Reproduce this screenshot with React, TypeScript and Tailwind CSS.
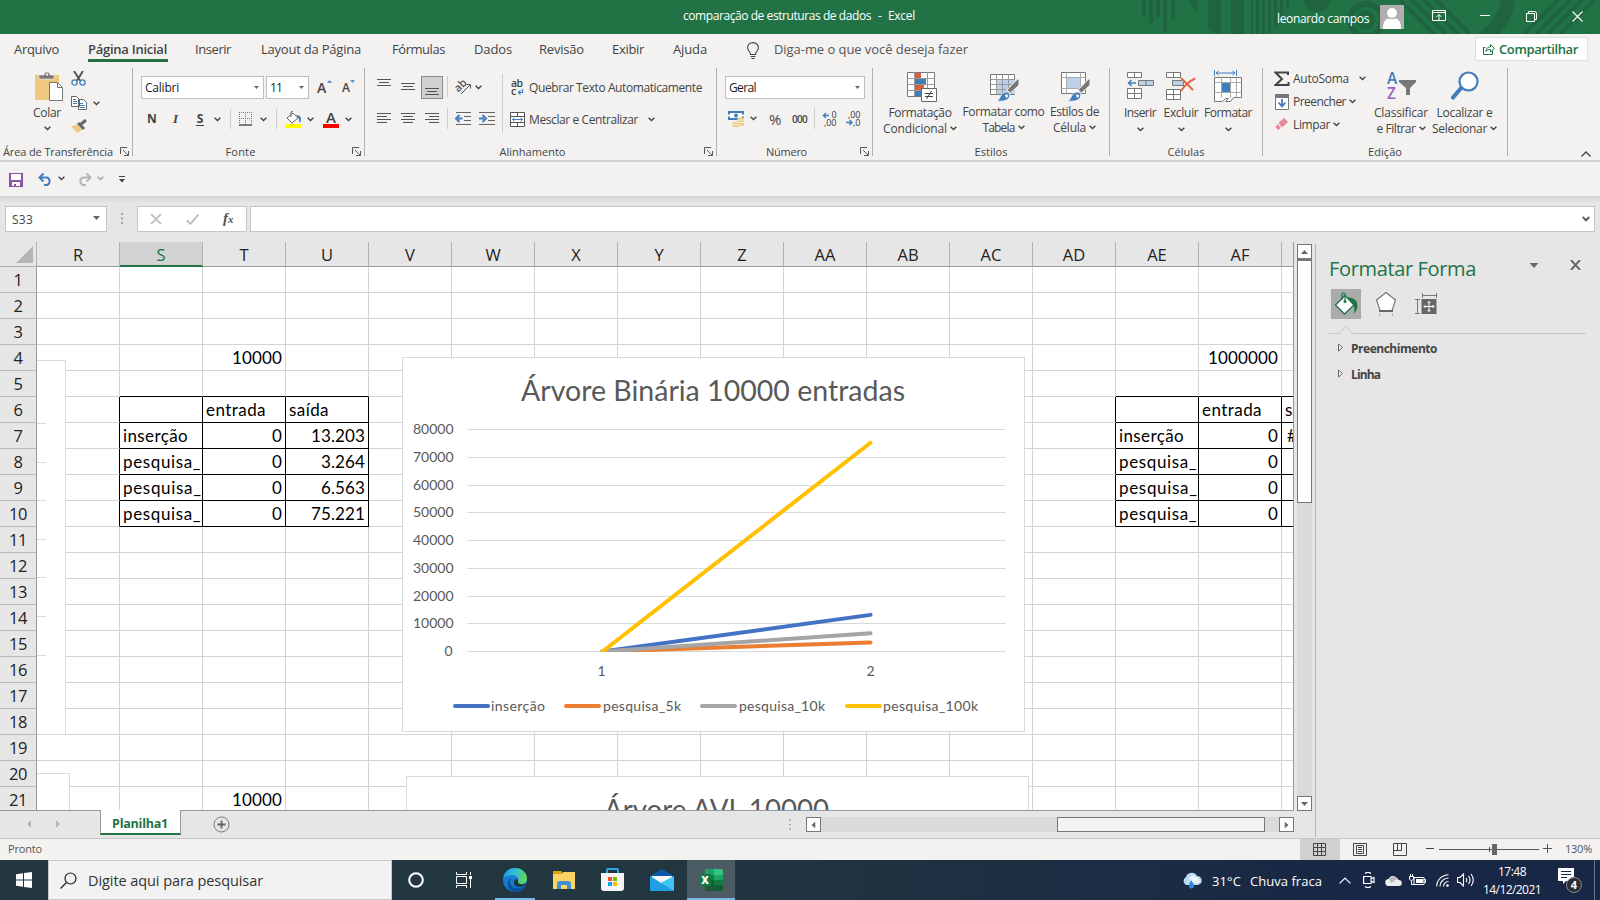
import { useLayoutEffect, useRef, useState } from "react";
import type { ReactNode } from "react";

const UI = "font-['Open_Sans','Noto_Sans',sans-serif]";
const BODY = "font-['Lato','Open_Sans',sans-serif]";

/** One line of text tracked so that it fills exactly `w` pixels. */
function Fit({ w, className = "", children }: { w: number; className?: string; children: string }) {
  const ref = useRef<HTMLSpanElement>(null);
  const [spacing, setSpacing] = useState(0);
  useLayoutEffect(() => {
    const el = ref.current;
    if (!el) return;
    const natural = el.getBoundingClientRect().width - spacing * children.length;
    setSpacing((w - natural) / children.length);
  }, [w, children]);
  return (
    <span className={`block shrink-0 whitespace-nowrap ${className}`} style={{ width: w }}>
      <span ref={ref} className="inline-block" style={{ letterSpacing: spacing }}>
        {children}
      </span>
    </span>
  );
}

function Chev({ className = "" }: { className?: string }) {
  return (
    <svg viewBox="0 0 7 5" className={`h-[5px] w-[7px] shrink-0 ${className}`}>
      <path d="M.6.8 3.5 3.6 6.4.8" fill="none" stroke="#444" strokeWidth="1.4" />
    </svg>
  );
}

function Caret({ className = "", color = "#666" }: { className?: string; color?: string }) {
  return (
    <svg viewBox="0 0 7 4" className={`shrink-0 ${className}`}>
      <path d="M0 0h7L3.500 4z" fill={color} />
    </svg>
  );
}

function Launcher() {
  return (
    <svg viewBox="0 0 9 9" className="h-[9px] w-[9px] shrink-0">
      <path d="M.5 7V.5H7M3 3l5 5M8.500 4v4.500H4" fill="none" stroke="#555" />
    </svg>
  );
}

function Sep({ className }: { className: string }) {
  return <div className={`w-px shrink-0 bg-[#cfcdcb] ${className}`} />;
}

function Group({ width, caption, cw, launcher, children }: { width: string; caption: string; cw: number; launcher?: boolean; children: ReactNode }) {
  return (
    <section className={`flex h-[88px] shrink-0 flex-col border-r border-[#b3b0ad] ${width}`}>
      <div className="flex h-[75px] shrink-0">{children}</div>
      <div className="flex h-[16px] items-center">
        <div className={`flex flex-1 justify-center pt-[2px] ${launcher ? "pr-[4px]" : ""}`}>
          <Fit w={cw} className="text-[11px] leading-4">{caption}</Fit>
        </div>
        {launcher && <div className="flex w-[12px] shrink-0"><Launcher /></div>}
      </div>
    </section>
  );
}

function Lines({ rows, className = "" }: { rows: [number, number][]; className?: string }) {
  return (
    <svg viewBox={`0 0 14 ${rows.length * 3}`} className={`w-[14px] shrink-0 ${className}`} height={rows.length * 3}>
      {rows.map(([x, w], i) => (
        <rect key={i} x={x} y={i * 3} width={w} height="1" fill="#555" />
      ))}
    </svg>
  );
}

/* ---------- title bar ---------- */
function TitleBar() {
  return (
    <header className="relative flex h-[34px] shrink-0 items-center overflow-hidden bg-[#217346] text-white">
      <svg viewBox="1130 0 470 34" className="absolute top-0 right-0 h-[34px] w-[470px]">
        <g fill="#1f633f">
          <path d="M1142 0h4v16h-4zM1149 0h4v23h-4zM1156 0h4v17h-4zM1163 0h4v32h-4zM1171 0h4v20h-4z" />
          <path d="M1189 0h8v14q-4-6-8-14zM1208 0h13v34q-8-1-13-6zM1231 0h13v34h-13z" />
          <path d="M1251 0h2v34h-2zM1256 0h3v34h-3zM1262 0h3v34h-3zM1268 0h3v33h-3zM1274 0h3v28h-3zM1280 0h3v18h-3zM1286 0h3v9h-3z" />
          <circle cx="1317" cy="-2" r="14" />
        </g>
        <g fill="none" stroke="#1f633f">
          <circle cx="1366" cy="20" r="16" strokeWidth="6" />
          <circle cx="1366" cy="20" r="7" strokeWidth="5" />
          <path d="M1400 0l34 34M1412 0l34 34M1424 0l34 34M1436 0l34 34" strokeWidth="4" />
          <path d="M1508-4Q1508 20 1484 38" strokeWidth="14" />
          <path d="M1524 34l34-34M1536 34l34-34M1548 34l34-34M1560 34l34-34" strokeWidth="4" />
        </g>
      </svg>
      <Fit w={188} className="relative ml-[683px] mb-[2px] text-xs">comparação de estruturas de dados</Fit>
      <Fit w={5} className="relative ml-[7px] mb-[2px] text-xs">-</Fit>
      <Fit w={27} className="relative ml-[5px] mb-[2px] text-xs">Excel</Fit>
      <Fit w={92} className="relative ml-[362px] mt-[3px] text-xs">leonardo campos</Fit>
      <svg viewBox="0 0 24 24" className="relative ml-[11px] h-6 w-6 shrink-0 bg-[#b0aeb0]">
        <circle cx="12" cy="8" r="5" fill="#fff" />
        <path d="M3 24c0-7 2-10 6-10.500q3 1.500 6 0c4 .5 6 3.500 6 10.500z" fill="#fff" />
      </svg>
      <svg viewBox="0 0 14 12" className="relative ml-[28px] mb-[2px] h-3 w-[14px] shrink-0">
        <path d="M.5.500h13v10H.500zM.500 2.500h13M7 10V4.500M4.500 7L7 4.500 9.500 7" fill="none" stroke="#fff" />
      </svg>
      <svg viewBox="0 0 10 1" className="relative ml-[34px] mb-[3px] h-px w-[10px] shrink-0"><path d="M0 .5h10" stroke="#fff" /></svg>
      <svg viewBox="0 0 11 11" className="relative ml-[36px] mb-[2px] h-[11px] w-[11px] shrink-0">
        <path d="M.5 2.500h8v8h-8zM2.500 2V.500h6q2 0 2 2v6H9" fill="none" stroke="#fff" />
      </svg>
      <svg viewBox="0 0 11 11" className="relative ml-[35px] mb-[2px] h-[11px] w-[11px] shrink-0">
        <path d="M.5.500l10 10M10.500.500l-10 10" stroke="#fff" strokeWidth="1.100" />
      </svg>
    </header>
  );
}

function Tabs() {
  const t = "text-[13px] leading-[18px]";
  return (
    <nav className="flex h-[34px] shrink-0 items-start pt-[6px] text-[#444]">
      <Fit w={45} className={`ml-[14px] ${t}`}>Arquivo</Fit>
      <div className="ml-[29px] flex h-[22px] w-[80px] shrink-0 border-b-3 border-[#217346]">
        <Fit w={79} className="text-[13px] leading-[18px] font-semibold">Página Inicial</Fit>
      </div>
      <Fit w={36} className={`ml-[27px] ${t}`}>Inserir</Fit>
      <Fit w={100} className={`ml-[30px] ${t}`}>Layout da Página</Fit>
      <Fit w={53} className={`ml-[31px] ${t}`}>Fórmulas</Fit>
      <Fit w={38} className={`ml-[29px] ${t}`}>Dados</Fit>
      <Fit w={45} className={`ml-[27px] ${t}`}>Revisão</Fit>
      <Fit w={32} className={`ml-[28px] ${t}`}>Exibir</Fit>
      <Fit w={34} className={`ml-[29px] ${t}`}>Ajuda</Fit>
      <svg viewBox="0 0 12 17" className="mt-[2px] ml-[40px] h-[17px] w-3 shrink-0">
        <path d="M3.500 12.500C3.500 9.500.6 9 .6 5.700.6 2.600 3 .6 6 .6s5.400 2 5.400 5.100c0 3.300-2.900 3.800-2.900 6.800zM3.500 14.500h5M4.500 16.500h3" fill="none" stroke="#444" strokeWidth="1.100" />
      </svg>
      <Fit w={194} className={`ml-[15px] ${t} text-[#555]`}>Diga-me o que você deseja fazer</Fit>
      <div className="-mt-[3px] ml-[507px] flex h-[24px] w-[113px] shrink-0 items-center rounded-[2px] border border-[#e1dfdd] bg-white text-[#217346]">
        <svg viewBox="0 0 12 12" className="ml-[7px] h-3 w-3 shrink-0">
          <path d="M2.500 4.500h-2v7h9V8M3 8.500C3 5 5 4 7.500 4V1.500l4 4-4 3.500V6.500C5.500 6.500 4 7 3 8.500z" fill="none" stroke="#217346" />
        </svg>
        <Fit w={79} className="ml-[4px] text-[13px] leading-[18px] font-semibold">Compartilhar</Fit>
      </div>
    </nav>
  );
}

/* ---------- ribbon drawings ---------- */
function TableBrush({ cell }: { cell?: boolean }) {
  return (
    <svg viewBox="0 0 30 30" className="h-[30px] w-[30px] shrink-0">
      {cell ? (
        <>
          <path d="M1.500.500h24v21h-24z" fill="#fff" stroke="#777" />
          <path d="M6.500.500v21M20.500.500v21M1.500 5.500h24M1.500 16.500h24" stroke="#aaa" fill="none" />
          <path d="M7 6h13v10H7z" fill="#bcd0ea" />
        </>
      ) : (
        <>
          <path d="M1.500 2.500h24v20h-24z" fill="#fff" stroke="#777" />
          <path d="M8 8h18v14H8z" fill="#bcd0ea" />
          <path d="M7.500 2.500v20M13.500 2.500v20M19.500 2.500v20M1.500 7.500h24M1.500 12.500h24M1.500 17.500h24" stroke="#999" fill="none" />
        </>
      )}
      <path d="M29 6.500 30 8v5l-8.500 8-3.500-3z" fill="#777" stroke="#f3f2f1" />
      <path d="M8 29c3-1 3.500-9 9.500-9 4 0 4 5 1.500 7-2.500 2-6 2.500-11 2z" fill="#3f7dbb" stroke="#f3f2f1" strokeWidth=".8" />
      <path d="M16 23c2-1 3 0 3 1s-1 1.500-2 2z" fill="#fff" />
    </svg>
  );
}

const AlignRows = {
  l: [[0, 14], [0, 10], [0, 14], [0, 10]] as [number, number][],
  c: [[0, 14], [2, 10], [0, 14], [2, 10]] as [number, number][],
  r: [[0, 14], [4, 10], [0, 14], [4, 10]] as [number, number][],
  v: [[0, 14], [2, 10], [0, 14]] as [number, number][],
};

function BigLabel({ a, aw, b, bw }: { a: string; aw: number; b?: string; bw?: number }) {
  return (
    <div className="flex flex-col items-center">
      <Fit w={aw} className="text-xs leading-4">{a}</Fit>
      <div className="flex h-4 items-center">
        {b && <Fit w={bw ?? 0} className="mr-[3px] text-xs leading-4">{b}</Fit>}
        <Chev className={b ? "mb-px" : ""} />
      </div>
    </div>
  );
}

function Ribbon() {
  return (
    <div className="flex h-[94px] shrink-0 border-b-2 border-[#d2d0ce] text-[#444]">
      <Group width="w-[133px]" caption="Área de Transferência" cw={110} launcher>
        <div className="ml-[31px] flex w-[32px] flex-col items-center pt-[3px]">
          <svg viewBox="0 0 28 31" className="ml-[3px] h-[31px] w-7 shrink-0">
            <path d="M0 4h24v25H0z" fill="#edc87e" />
            <path d="M4 8V4h5q0-3 3-3t3 3h4v4z" fill="#777" stroke="#f3f2f1" strokeWidth=".6" />
            <circle cx="12" cy="3.500" r="1.200" fill="#f3f2f1" />
            <path d="M14.500 11.500h8l5 5v13h-13z" fill="#fff" stroke="#777" />
            <path d="M22.500 11.500v5h5" fill="none" stroke="#777" />
          </svg>
          <Fit w={28} className="mt-[3px] text-xs leading-4">Colar</Fit>
          <Chev className="mt-[5px]" />
        </div>
        <div className="ml-[8px] flex w-[30px] flex-col pt-[3px]">
          <svg viewBox="0 0 15 15" className="h-[15px] w-[15px]">
            <path d="M3 0l6 9.500M12 0L6 9.500" stroke="#555" strokeWidth="2" />
            <circle cx="3.500" cy="11.500" r="2.600" fill="none" stroke="#3f7dbb" strokeWidth="1.300" />
            <circle cx="11.500" cy="11.500" r="2.600" fill="none" stroke="#3f7dbb" strokeWidth="1.300" />
          </svg>
          <div className="mt-[10px] flex items-center">
            <svg viewBox="0 0 16 14" className="h-[14px] w-4 shrink-0">
              <path d="M.5.500h5l3 3v7h-8zM7.500 3.500h5l3 3v7h-8z" fill="#fff" stroke="#666" />
              <path d="M2 3.500h3M2 5.500h4M2 7.500h4M9 7.500h3M9 9.500h5M9 11.500h5" stroke="#3f7dbb" />
            </svg>
            <Chev className="ml-[6px]" />
          </div>
          <svg viewBox="0 0 16 15" className="mt-[9px] h-[15px] w-4">
            <path d="M15 1l-6 5M7 4l6 6" stroke="#666" strokeWidth="3" />
            <path d="M0 7.500l6-2 5 5L6.500 14z" fill="#edc87e" />
          </svg>
        </div>
      </Group>

      <Group width="w-[232px]" caption="Fonte" cw={30} launcher>
        <div className="flex w-full flex-col pl-[8px]">
          <div className="flex items-center pt-[8px]">
            <div className="flex h-[23px] w-[123px] shrink-0 items-center border border-[#c1bfbd] bg-white pl-[3px] text-[#222]">
              <Fit w={34} className="text-xs">Calibri</Fit>
              <Caret className="ml-[75px] h-[3px] w-[5px]" />
            </div>
            <div className="ml-[2px] flex h-[23px] w-[43px] shrink-0 items-center border border-[#c1bfbd] bg-white pl-[3px] text-[#222]">
              <Fit w={12} className="text-xs">11</Fit>
              <Caret className="ml-[17px] h-[3px] w-[5px]" />
            </div>
            <span className="ml-[8px] w-[10px] text-[14px] leading-4 font-semibold">A</span>
            <svg viewBox="0 0 6 3" className="mb-[13px] h-[3px] w-[5px]"><path d="M0 3h6L3 0z" fill="#3f7dbb" /></svg>
            <span className="ml-[10px] w-[8px] text-[12px] leading-4 font-semibold">A</span>
            <svg viewBox="0 0 6 3" className="mb-[13px] h-[3px] w-[5px]"><path d="M0 0h6L3 3z" fill="#3f7dbb" /></svg>
          </div>
          <div className="mt-[10px] flex h-[20px] items-center">
            <span className="ml-[6px] w-[10px] text-[12px] leading-4 font-bold">N</span>
            <span className="ml-[16px] w-[8px] font-['Liberation_Serif',serif] text-[13px] leading-4 font-bold italic">I</span>
            <span className="ml-[15px] w-[8px] border-b border-[#444] text-center text-[12px] leading-[12px] font-bold">S</span>
            <Chev className="ml-[10px]" />
            <Sep className="ml-[9px] h-5" />
            <svg viewBox="0 0 13 14" className="ml-[8px] h-[14px] w-[13px] shrink-0">
              <path d="M.5 0v13M6.500 0v13M12.500 0v13M0 .5h13M0 6.500h13" fill="none" stroke="#777" strokeDasharray="1 1" />
              <path d="M0 13h13" stroke="#555" strokeWidth="1.500" />
            </svg>
            <Chev className="ml-[8px]" />
            <Sep className="ml-[9px] h-5" />
            <svg viewBox="0 0 16 17" className="ml-[8px] h-[17px] w-4 shrink-0">
              <path d="M2 7l6-5 5 5-6 5z" fill="#fff" stroke="#666" />
              <path d="M6 6V2q0-2 2-1.500" fill="none" stroke="#666" />
              <path d="M11 4q5 0 5 4t-2 3q1-3-3-7z" fill="#3f7dbb" />
              <path d="M0 13h16v4H0z" fill="#ff0" />
            </svg>
            <Chev className="ml-[6px]" />
            <span className="ml-[9px] flex h-[18px] w-4 shrink-0 justify-center border-b-4 border-[#f00] text-[15px] leading-[15px] font-semibold">A</span>
            <Chev className="ml-[6px]" />
          </div>
        </div>
      </Group>

      <Group width="w-[352px]" caption="Alinhamento" cw={66} launcher>
        <div className="ml-[12px] flex w-[125px] shrink-0 flex-col">
          <div className="mt-[8px] flex h-[23px] items-start">
            <Lines rows={AlignRows.v} className="mt-[3px]" />
            <Lines rows={AlignRows.v} className="mt-[7px] ml-[10px]" />
            <div className="ml-[6px] flex h-[23px] w-[22px] shrink-0 justify-center border border-[#8a8886] bg-[#d2d0ce] pt-[11px]">
              <Lines rows={AlignRows.v} />
            </div>
            <Sep className="ml-[4px] h-[21px]" />
            <svg viewBox="0 0 17 17" className="mt-[2px] ml-[7px] h-[17px] w-[17px] shrink-0 overflow-visible">
              <text x="-1" y="11.500" fontSize="11" fontWeight="600" fill="#555" transform="rotate(-45 5 8)" className={UI}>ab</text>
              <path d="M6 16l9-9M11.500 6.500h4v4" stroke="#555" fill="none" />
            </svg>
            <Chev className="mt-[9px] ml-[3px]" />
          </div>
          <div className="mt-[9px] flex h-[21px] items-start">
            <Lines rows={AlignRows.l} className="mt-[5px]" />
            <Lines rows={AlignRows.c} className="mt-[5px] ml-[10px]" />
            <Lines rows={AlignRows.r} className="mt-[5px] ml-[10px]" />
            <Sep className="ml-[8px] h-[21px]" />
            <svg viewBox="0 0 16 14" className="mt-[4px] ml-[7px] h-[14px] w-4 shrink-0">
              <path d="M1 .5h15M9 4.500h7M9 8.500h7M1 12.500h15" stroke="#666" />
              <path d="M7.500 6.500H3M4.500 3L1 6.500 4.500 10" stroke="#3f7dbb" strokeWidth="2" fill="none" />
            </svg>
            <svg viewBox="0 0 16 14" className="mt-[4px] ml-[8px] h-[14px] w-4 shrink-0">
              <path d="M0 .5h16M9 4.500h7M9 8.500h7M0 12.500h16" stroke="#666" />
              <path d="M0 6.500h5M3.500 3L7 6.500 3.500 10" stroke="#3f7dbb" strokeWidth="2" fill="none" />
            </svg>
          </div>
        </div>
        <Sep className="mt-[6px] h-[59px]" />
        <div className="ml-[7px] flex flex-col">
          <div className="mt-[8px] flex h-[23px] items-center">
            <svg viewBox="0 0 14 17" className={`ml-px h-[17px] w-[14px] shrink-0 overflow-visible ${UI}`}>
              <text x="0" y="8" fontSize="10.500" fontWeight="600" fill="#444" textLength="12">ab</text>
              <text x="0" y="16" fontSize="10.500" fontWeight="600" fill="#444">c</text>
              <path d="M11.500 10v3.500H8M9.500 11.500l-2 2 2 2" stroke="#3f7dbb" strokeWidth="1.200" fill="none" />
            </svg>
            <Fit w={173} className="ml-[4px] text-xs leading-4">Quebrar Texto Automaticamente</Fit>
          </div>
          <div className="mt-[9px] flex h-[23px] items-center">
            <svg viewBox="0 0 15 15" className="h-[15px] w-[15px] shrink-0">
              <path d="M.5.500h14v14H.500zM.500 4.500h14M.500 10.500h14M7.500.500v4M7.500 10.500v4" fill="#fff" stroke="#555" />
              <path d="M2.500 7.500h10M4.500 5.700L2.500 7.500l2 1.800M10.500 5.700l2 1.800-2 1.800" fill="none" stroke="#3f7dbb" />
            </svg>
            <Fit w={109} className="ml-[4px] text-xs leading-4">Mesclar e Centralizar</Fit>
            <Chev className="ml-[10px]" />
          </div>
        </div>
      </Group>

      <Group width="w-[156px]" caption="Número" cw={41} launcher>
        <div className="ml-[8px] flex flex-col">
          <div className="mt-[8px] flex h-[23px] w-[140px] items-center border border-[#c1bfbd] bg-white pl-[3px] text-[#222]">
            <Fit w={27} className="text-xs">Geral</Fit>
            <Caret className="ml-[99px] h-[3px] w-[5px]" />
          </div>
          <div className="mt-[9px] flex h-[21px] items-center">
            <svg viewBox="0 0 17 17" className="ml-[3px] h-[17px] w-[17px] shrink-0">
              <path d="M1 2h14v7H1z" fill="#fff" stroke="#3f7dbb" strokeWidth="2" />
              <circle cx="8" cy="5.500" r="2" fill="#3f7dbb" />
              <path d="M1 4.500v2M15 4.500v2" stroke="#fff" strokeWidth="2" />
              <path d="M9.500 7.500h6.500v8H9.500zM4.500 12.500h7v4.500h-7z" fill="#edc87e" />
              <path d="M9.500 10h6.500M9.500 12.500h6.500M4.500 14.800h7" stroke="#fff" strokeWidth=".8" />
            </svg>
            <Chev className="ml-[5px]" />
            <span className="ml-[12px] w-[14px] text-[15px] leading-5">%</span>
            <Fit w={15} className="ml-[9px] text-[10px] leading-4 font-semibold">000</Fit>
            <Sep className="ml-[7px] h-[21px]" />
            <svg viewBox="0 0 15 15" className={`ml-[7px] h-[15px] w-[15px] shrink-0 overflow-visible ${UI}`}>
              <path d="M7 4.500H1.500M4 2L1.500 4.500 4 7" fill="none" stroke="#3f7dbb" strokeWidth="1.400" />
              <text x="9.500" y="7" fontSize="9" fill="#333" textLength="5">0</text>
              <text x="2" y="15" fontSize="9" fill="#333" textLength="12.500">,00</text>
            </svg>
            <svg viewBox="0 0 15 15" className={`ml-[9px] h-[15px] w-[15px] shrink-0 overflow-visible ${UI}`}>
              <path d="M0 11.500h6M3.500 9l2.500 2.500L3.500 14" fill="none" stroke="#3f7dbb" strokeWidth="1.400" />
              <text x="2" y="7" fontSize="9" fill="#333" textLength="12.500">,00</text>
              <text x="7" y="15" fontSize="9" fill="#333" textLength="7.500">,0</text>
            </svg>
          </div>
        </div>
      </Group>

      <Group width="w-[237px]" caption="Estilos" cw={33}>
        <div className="ml-[10px] flex w-[74px] shrink-0 flex-col items-center pt-[3px]">
          <svg viewBox="0 0 31 31" className="ml-[2px] h-[31px] w-[31px] shrink-0">
            <path d="M1.500 1.500h27v24h-27z" fill="#fff" stroke="#777" />
            <path d="M8.500 1v25M21.500 1v25M1 7.500h28M1 13.500h28M1 19.500h28" stroke="#999" fill="none" />
            <path d="M9 2h6v5H9zM9 14h9v5H9z" fill="#d9603f" />
            <path d="M9 8h11v5H9zM9 20h6v5H9z" fill="#3f7dbb" />
            <path d="M15.500 17.500h15v13h-15z" fill="#fff" stroke="#666" />
            <path d="M19 22.500h8M19 25.500h8M25.500 20l-5 8" stroke="#444" />
          </svg>
          <div className="mt-[3px]"><BigLabel a="Formatação" aw={63} b="Condicional" bw={64} /></div>
        </div>
        <div className="ml-[5px] flex w-[83px] shrink-0 flex-col items-center pt-[4px]">
          <TableBrush />
          <div className="mt-[2px]"><BigLabel a="Formatar como" aw={82} b="Tabela" bw={32} /></div>
        </div>
        <div className="ml-[4px] flex w-[51px] shrink-0 flex-col items-center pt-[4px]">
          <TableBrush cell />
          <div className="mt-[2px]"><BigLabel a="Estilos de" aw={49} b="Célula" bw={33} /></div>
        </div>
      </Group>

      <Group width="w-[153px]" caption="Células" cw={37}>
        <div className="ml-[13px] flex w-[34px] shrink-0 flex-col items-center pt-[3px]">
          <svg viewBox="0 0 27 31" className="h-[31px] w-[27px] shrink-0">
            <path d="M.5 1.500h14v5H.500zM7.500 1.500v5M.500 17.500h14v10H.500zM7.500 17.500v10M.500 22.500h14" fill="#fff" stroke="#777" />
            <path d="M11.500 9.500h15v5h-15zM19 9.500v5" fill="#bcd0ea" stroke="#777" />
            <path d="M9 12H2M4.500 9L1.500 12l3 3" fill="none" stroke="#3f7dbb" strokeWidth="1.500" />
          </svg>
          <div className="mt-[3px]"><BigLabel a="Inserir" aw={32} /></div>
        </div>
        <div className="ml-[6px] flex w-[36px] shrink-0 flex-col items-center pt-[3px]">
          <svg viewBox="0 0 30 31" className="h-[31px] w-[30px] shrink-0">
            <path d="M.5 1.500h14v5H.500zM7.500 1.500v5M.500 18.500h14v10H.500zM7.500 18.500v10M.500 23.500h14" fill="#fff" stroke="#777" />
            <path d="M6.500 9.500h11v5h-11z" fill="#bcd0ea" stroke="#777" />
            <path d="M15 7l12 12M29 7.500Q20 12 15 20" fill="none" stroke="#e06848" strokeWidth="2" />
          </svg>
          <div className="mt-[3px]"><BigLabel a="Excluir" aw={35} /></div>
        </div>
        <div className="ml-[4px] flex w-[50px] shrink-0 flex-col items-center pt-[2px]">
          <svg viewBox="0 0 29 32" className="h-[32px] w-[29px] shrink-0">
            <path d="M.5 0v6M22.500 0v6M2 3h19M4.500 1L2 3l2.500 2M18.500 1L21 3l-2.500 2" fill="none" stroke="#3f7dbb" />
            <path d="M.5 7.500h27v20h-8l-3 4h-5l3-3h-3l-3 3h-8z" fill="#fff" stroke="#777" />
            <path d="M7.500 7.500v20M16.500 7.500v20M22.500 7.500v20M.500 12.500h27M.500 22.500h27" stroke="#aaa" />
            <path d="M8 13h8v9H8z" fill="#3f7dbb" />
          </svg>
          <div className="mt-[3px]"><BigLabel a="Formatar" aw={48} /></div>
        </div>
      </Group>

      <Group width="w-[245px]" caption="Edição" cw={34}>
        <div className="ml-[11px] flex w-[92px] shrink-0 flex-col">
          <div className="-mt-px flex h-[23px] items-center">
            <svg viewBox="0 0 16 16" className="h-4 w-4 shrink-0">
              <path d="M14 4V1.500H1.500L8 8l-6.500 6h13V11" fill="none" stroke="#444" strokeWidth="2" />
            </svg>
            <Fit w={56} className="ml-[3px] text-xs leading-4">AutoSoma</Fit>
            <Chev className="ml-[10px]" />
          </div>
          <div className="flex h-[23px] items-center">
            <svg viewBox="0 0 14 16" className="ml-px h-4 w-[14px] shrink-0">
              <path d="M.5.500h13v15H.500z" fill="#fff" stroke="#777" />
              <path d="M0 0h14v4H0z" fill="#777" />
              <path d="M7 5v7M3.500 8.500L7 12.500l3.500-4" fill="none" stroke="#3f7dbb" strokeWidth="1.800" />
            </svg>
            <Fit w={53} className="ml-[4px] text-xs leading-4">Preencher</Fit>
            <Chev className="ml-[3px]" />
          </div>
          <div className="flex h-[23px] items-center">
            <svg viewBox="0 0 14 14" className="ml-px mb-[2px] h-[14px] w-[14px] shrink-0">
              <path d="M9 1l4 4-6 5.500-3.500-4.500z" fill="#e8899a" />
              <path d="M2.500 7L6 11l-3 2-2.500-3z" fill="#e8899a" />
            </svg>
            <Fit w={37} className="ml-[4px] text-xs leading-4">Limpar</Fit>
            <Chev className="ml-[3px]" />
          </div>
        </div>
        <div className="ml-[5px] flex w-[60px] shrink-0 flex-col items-center pt-[3px]">
          <svg viewBox="0 0 29 31" className={`h-[31px] w-[29px] shrink-0 overflow-visible ${UI}`}>
            <text x="0" y="12.500" fontSize="15.500" fontWeight="600" fill="#3f7dbb" textLength="11">A</text>
            <text x="0" y="27.500" fontSize="15.500" fontWeight="600" fill="#9b5fc0">Z</text>
            <path d="M12 9h17v2l-6 6v7h-4v-7l-7-6z" fill="#777" />
          </svg>
          <div className="mt-[3px]"><BigLabel a="Classificar" aw={54} b="e Filtrar" bw={39} /></div>
        </div>
        <div className="ml-[2px] flex w-[63px] shrink-0 flex-col items-center pt-[3px]">
          <svg viewBox="0 0 28 31" className="h-[31px] w-7 shrink-0">
            <path d="M11 16L2 26.500" stroke="#3f7dbb" strokeWidth="4.200" strokeLinecap="round" />
            <circle cx="17.500" cy="10.500" r="9" fill="#fff" stroke="#3f7dbb" strokeWidth="2.200" />
          </svg>
          <div className="mt-[3px]"><BigLabel a="Localizar e" aw={56} b="Selecionar" bw={55} /></div>
        </div>
      </Group>
      <svg viewBox="0 0 10 6" className="mt-[83px] ml-[73px] h-[6px] w-[10px] shrink-0">
        <path d="M.5 5.500L5 1l4.500 4.500" fill="none" stroke="#444" strokeWidth="1.300" />
      </svg>
    </div>
  );
}

function QuickAccess() {
  return (
    <div className="flex h-[34px] shrink-0 items-center">
      <svg viewBox="0 0 14 14" className="mt-px ml-[9px] h-[14px] w-[14px] shrink-0">
        <path d="M0 0h14v14H0z" fill="#8a54a8" />
        <path d="M2 1h10v6H2zM3 9h8v4H3z" fill="#fff" />
        <path d="M5 11h2v3H5z" fill="#8a54a8" />
      </svg>
      <svg viewBox="0 0 15 13" className="ml-[15px] h-[13px] w-[15px] shrink-0">
        <path d="M1.500 4.500H9a4 4 0 010 7.500H6M5.500.500l-4 4 4 4" fill="none" stroke="#3f7dbb" strokeWidth="2" />
      </svg>
      <Chev className="ml-[5px] mb-px" />
      <svg viewBox="0 0 15 13" className="ml-[12px] h-[13px] w-[15px] shrink-0">
        <path d="M13.500 4.500H6A4 4 0 006 12h3M9.500.500l4 4-4 4" fill="none" stroke="#b8b6b4" strokeWidth="2" />
      </svg>
      <Chev className="ml-[5px] mb-px opacity-45" />
      <svg viewBox="0 0 6 7" className="mt-px ml-[15px] h-[7px] w-[6px] shrink-0">
        <path d="M0 .5h6" stroke="#444" /><path d="M0 3h6L3 6.500z" fill="#444" />
      </svg>
    </div>
  );
}

function FormulaBar() {
  return (
    <div className="flex h-[46px] shrink-0 items-start bg-[#e6e6e6] bg-linear-to-b from-[#d2d2d2] to-[#e6e6e6] to-15% pt-[10px]">
      <div className="ml-[5px] flex h-[26px] w-[102px] shrink-0 items-center border border-[#c6c6c6] bg-white pl-[6px] text-[#444]">
        <Fit w={21} className="mt-px text-xs">S33</Fit>
        <Caret className="mb-[3px] ml-[60px] h-[4px] w-[7px]" />
      </div>
      <svg viewBox="0 0 2 12" className="mt-[7px] ml-[14px] h-3 w-[2px] shrink-0">
        <path d="M0 1h2M0 5.500h2M0 10h2" stroke="#a0a0a0" strokeWidth="2" />
      </svg>
      <div className="ml-[14px] flex h-[26px] w-[110px] shrink-0 items-center border border-[#c6c6c6] bg-white">
        <svg viewBox="0 0 12 10" className="ml-[12px] h-[10px] w-3 shrink-0"><path d="M1 0l10 10M11 0L1 10" stroke="#c0c0c0" strokeWidth="1.800" /></svg>
        <svg viewBox="0 0 13 11" className="ml-[24px] h-[11px] w-[13px] shrink-0"><path d="M.8 6.500l3.700 3.300L12.500.500" fill="none" stroke="#c0c0c0" strokeWidth="2" /></svg>
        <span className="mb-px ml-[24px] font-['Liberation_Serif',serif] text-[15px] font-bold text-[#555] italic">f<span className="text-[11px]">x</span></span>
      </div>
      <div className="ml-[3px] flex h-[26px] w-[1345px] shrink-0 items-center justify-end border border-[#c6c6c6] bg-white pr-[4px]">
        <svg viewBox="0 0 8 6" className="h-[6px] w-2"><path d="M.8 1L4 4.300 7.200 1" fill="none" stroke="#555" strokeWidth="1.900" /></svg>
      </div>
    </div>
  );
}

/* ---------- worksheet ---------- */
const COLS = ["R", "S", "T", "U", "V", "W", "X", "Y", "Z", "AA", "AB", "AC", "AD", "AE", "AF", "AG"];
type Cell = { text: string; right?: boolean; w?: number };
const CELLS: Record<string, Cell> = {
  T4: { text: "10000", right: true, w: 50 },
  T21: { text: "10000", right: true, w: 50 },
  AF4: { text: "1000000", right: true, w: 70 },
  T6: { text: "entrada", w: 60 },
  U6: { text: "saída", w: 40 },
  AF6: { text: "entrada", w: 60 },
  AG6: { text: "saída", w: 40 },
  AG7: { text: "#######", right: true, w: 74 },
  U7: { text: "13.203", right: true, w: 54 },
  U8: { text: "3.264", right: true, w: 44 },
  U9: { text: "6.563", right: true, w: 44 },
  U10: { text: "75.221", right: true, w: 54 },
};
for (const c of ["S", "AE"]) {
  CELLS[c + 7] = { text: "inserção", w: 65 };
  CELLS[c + 8] = { text: "pesquisa_5k", w: 98 };
  CELLS[c + 9] = { text: "pesquisa_10k", w: 109 };
  CELLS[c + 10] = { text: "pesquisa_100k", w: 119 };
}
for (const c of ["T", "AF"]) for (const r of [7, 8, 9, 10]) CELLS[c + r] = { text: "0", right: true, w: 10 };

const inTable = (c: number) => (c >= 1 && c <= 3) || c >= 13;
const blackRight = (r: number, c: number) => r >= 6 && r <= 10 && (c <= 3 || c >= 12);
const blackBottom = (r: number, c: number) => r >= 5 && r <= 10 && inTable(c);

function Grid() {
  return (
    <div className="relative flex h-[569px] w-[1294px] shrink-0 flex-col overflow-hidden border-r border-b border-r-[#999] border-b-[#999] bg-white">
      <div className="flex h-[25px] w-[1294px] shrink-0 bg-[#e6e6e6] text-[16.500px] leading-[25px]">
        <div className="flex w-[37px] shrink-0 items-end justify-end border-r border-b border-[#b0b0b0] pr-[3px] pb-[3px]">
          <svg viewBox="0 0 17 17" className="h-[17px] w-[17px]"><path d="M17 0v17H0z" fill="#b4b4b4" /></svg>
        </div>
        {COLS.map((c) => (
          <div
            key={c}
            className={`w-[83px] shrink-0 border-r border-r-[#b0b0b0] text-center ${c === "S" ? "border-b-2 border-b-[#217346] bg-[#d2d2d2] text-[#217346]" : "border-b border-b-[#999] text-[#222]"}`}
          >
            {c === "AG" ? "" : c}
          </div>
        ))}
      </div>
      {Array.from({ length: 21 }, (_, i) => i + 1).map((r) => (
        <div key={r} className="flex h-[26px] w-[1370px] shrink-0">
          <div className={`w-[37px] shrink-0 border-r border-b border-r-[#999] border-b-[#b8b8b8] bg-[#e6e6e6] text-center text-[16.500px] leading-[26px] tracking-[-0.4px] text-[#222] ${UI}`}>{r}</div>
          {COLS.map((c, ci) => {
            const cell = CELLS[c + r];
            return (
              <div
                key={c}
                className={`flex w-[83px] shrink-0 overflow-hidden border-r border-b px-[3px] text-[17px] leading-[26px] text-black ${BODY} ${cell?.right ? "justify-end" : ""} ${blackRight(r, ci) ? "border-r-black" : "border-r-[#d4d4d4]"} ${blackBottom(r, ci) ? "border-b-black" : "border-b-[#d4d4d4]"}`}
              >
                {cell && <Fit w={cell.w ?? 60}>{cell.text}</Fit>}
              </div>
            );
          })}
        </div>
      ))}

      {/* floating charts */}
      <div className="absolute top-[118px] left-[37px] h-[375px] w-[29px] border-t border-r border-b border-[#d9d9d9] bg-white">
        <svg viewBox="0 0 9 374" className="h-[374px] w-[9px]">
          <path d="M0 62.500h9M0 101.500h9M0 139.500h9M0 178.500h9M0 216.500h9M0 255.500h9M0 294.500h9" stroke="#d9d9d9" />
        </svg>
      </div>
      <div className="absolute top-[531px] left-[37px] h-[60px] w-[33px] border-t border-r border-[#d9d9d9] bg-white" />
      <div className="absolute top-[115px] left-[402px]"><Chart /></div>
      <div className="absolute top-[534px] left-[406px] h-[60px] w-[623px] border border-[#d9d9d9] bg-white">
        <svg viewBox="0 0 621 60" className={`h-[60px] w-[621px] ${BODY}`}>
          <text x="197" y="43" fontSize="28" fill="#595959" textLength="225" lengthAdjust="spacingAndGlyphs">Árvore AVL 10000</text>
        </svg>
      </div>
    </div>
  );
}

const SERIES = [
  { name: "inserção", end: 13203, color: "#4472c4", lx: 51, tx: 89, tw: 54 },
  { name: "pesquisa_5k", end: 3264, color: "#ed7d31", lx: 162, tx: 201, tw: 78 },
  { name: "pesquisa_10k", end: 6563, color: "#a5a5a5", lx: 298, tx: 337, tw: 86 },
  { name: "pesquisa_100k", end: 75221, color: "#ffc000", lx: 443, tx: 481, tw: 95 },
];

function Chart() {
  const y = (v: number) => 294.5 - (v / 80000) * 222;
  return (
    <svg viewBox="0 0 623 375" className={`h-[375px] w-[623px] bg-white ${BODY}`} fill="#595959">
      <rect x=".5" y=".5" width="622" height="374" fill="#fff" stroke="#d9d9d9" />
      <text x="119" y="43.500" fontSize="28" textLength="384" lengthAdjust="spacingAndGlyphs">Árvore Binária 10000 entradas</text>
      {[8, 7, 6, 5, 4, 3, 2, 1, 0].map((k) => {
        const gy = Math.floor(y(k * 10000)) + 0.5;
        return (
          <g key={k}>
            <path d={`M65.500 ${gy}H603.500`} stroke="#d9d9d9" />
            <text x={k ? 11 : 42.5} y={gy + 4.5} fontSize="14" textLength={k ? 40.5 : 8}>{k ? String(k * 10000) : "0"}</text>
          </g>
        );
      })}
      <clipPath id="plot"><path d="M60 60h550v235H60z" /></clipPath>
      <g clipPath="url(#plot)">
        {SERIES.map((s) => (
          <path key={s.name} d={`M200.500 294.500L468.500 ${y(s.end)}`} stroke={s.color} strokeWidth="4" strokeLinecap="round" />
        ))}
      </g>
      <text x="195.500" y="319" fontSize="14">1</text>
      <text x="464.500" y="319" fontSize="14">2</text>
      {SERIES.map((s) => (
        <g key={s.name}>
          <path d={`M${s.lx + 2} 349h33`} stroke={s.color} strokeWidth="4" strokeLinecap="round" />
          <text x={s.tx} y="354" fontSize="14" textLength={s.tw}>{s.name}</text>
        </g>
      ))}
    </svg>
  );
}

function VerticalScroll() {
  return (
    <div className="ml-[3px] flex h-[569px] w-[15px] shrink-0 flex-col bg-[#dadada] bg-clip-content pt-[2px]">
      <div className="flex h-[15px] shrink-0 items-center justify-center border border-[#777] bg-white">
        <Caret className="h-1 w-[7px] rotate-180" />
      </div>
      <div className="h-[244px] shrink-0 border border-t-2 border-[#777] bg-white" />
      <div className="mt-auto flex h-[15px] shrink-0 items-center justify-center border border-[#777] bg-white">
        <Caret className="h-1 w-[7px]" />
      </div>
    </div>
  );
}

function SheetTabs() {
  return (
    <div className="flex h-[27px] w-[1315px] shrink-0">
      <svg viewBox="0 0 4 8" className="mt-[9px] ml-[27px] h-2 w-1 shrink-0"><path d="M4 0v8L0 4z" fill="#b8b8b8" /></svg>
      <svg viewBox="0 0 4 8" className="mt-[9px] ml-[25px] h-2 w-1 shrink-0"><path d="M0 0v8l4-4z" fill="#b8b8b8" /></svg>
      <div className="relative -mt-px ml-[40px] h-[25px] w-[81px] shrink-0 border-x border-b-2 border-x-[#999] border-b-[#217346] bg-white pl-[11px] text-[#217346]">
        <Fit w={56} className="text-[12.500px] leading-[27px] font-bold">Planilha1</Fit>
      </div>
      <svg viewBox="0 0 17 17" className="mt-[5px] ml-[32px] h-[17px] w-[17px] shrink-0">
        <circle cx="8.500" cy="8.500" r="7.500" fill="none" stroke="#777" />
        <path d="M8.500 4.500v8M4.500 8.500h8" stroke="#666" strokeWidth="1.800" />
      </svg>
      <svg viewBox="0 0 2 12" className="mt-[8px] ml-[559px] h-3 w-[2px] shrink-0">
        <path d="M0 1h2M0 5.500h2M0 10h2" stroke="#a8a8a8" strokeWidth="1.500" />
      </svg>
      <div className="mt-[6px] ml-[15px] flex h-[15px] w-[488px] shrink-0 bg-[#dadada]">
        <div className="flex w-[15px] shrink-0 items-center justify-center border border-[#777] bg-white"><Caret className="h-1 w-[7px] rotate-90" /></div>
        <div className="ml-[236px] w-[208px] shrink-0 border border-[#777] bg-[#f3f3f3]" />
        <div className="ml-auto flex w-[15px] shrink-0 items-center justify-center border border-[#777] bg-white"><Caret className="h-1 w-[7px] -rotate-90" /></div>
      </div>
    </div>
  );
}

function Pane() {
  return (
    <aside className="mt-[2px] mb-px flex w-[285px] shrink-0 flex-col border-l border-[#b4b4b4] pl-[13px] text-[#444]">
      <div className="mt-[10px] flex h-[28px] items-center">
        <Fit w={147} className="mt-[2px] text-[20px] leading-7 text-[#217346]">Formatar Forma</Fit>
        <Caret className="mb-[6px] ml-[53px] h-[5px] w-[10px]" />
        <svg viewBox="0 0 11 10" className="mb-[7px] ml-[31px] h-[10px] w-[11px]"><path d="M1 0l9 10M10 0L1 10" stroke="#666" strokeWidth="1.900" /></svg>
      </div>
      <div className="mt-[7px] flex h-[30px] shrink-0 items-start">
        <div className="ml-[2px] flex h-[30px] w-[30px] shrink-0 items-center justify-center bg-[#ababab]">
          <svg viewBox="0 0 24 24" className="h-6 w-6">
            <path d="M1.500 13L11 3.500 20 13l-9.500 9z" fill="#fff" stroke="#217346" strokeWidth="1.300" />
            <path d="M8 8V2.500Q8 1 9.500 1T11 2.500V9" fill="none" stroke="#217346" strokeWidth="1.200" />
            <circle cx="11" cy="9.500" r="1.500" fill="#217346" />
            <path d="M13 5q11 1 10.500 9-.5 5-3.500 7.500 1-6-1-9.500z" fill="#217346" />
          </svg>
        </div>
        <svg viewBox="0 0 22 25" className="mt-[2px] ml-[14px] h-[25px] w-[22px] shrink-0">
          <path d="M11 1.500l9.500 7.500L17 19.500H5L1.500 9z" fill="#fff" stroke="#777" strokeWidth="1.200" />
          <path d="M4 20h14" stroke="#666" strokeWidth="2" /><path d="M5 22l-1 3M17 22l1 3" stroke="#aaa" />
        </svg>
        <svg viewBox="0 0 22 22" className="mt-[4px] ml-[18px] h-[22px] w-[22px] shrink-0">
          <path d="M7.500 0v5M21.500 0v5M7 2.500h15M0 6.500h5M0 20.500h5M2.500 6.500v14" stroke="#777" fill="none" />
          <path d="M6.500 6h15v15h-15z" fill="#666" />
          <path d="M14 8.500v10M9 13.500h10M12.500 10L14 8.500l1.500 1.500M12.500 17l1.500 1.500 1.500-1.500M10.500 12L9 13.500l1.500 1.500M17.500 12l1.500 1.500-1.500 1.500" stroke="#fff" fill="none" />
        </svg>
      </div>
      <svg viewBox="0 0 258 9" className="mt-[6px] mb-[-1px] h-[9px] w-[258px] shrink-0">
        <path d="M0 8.500h10.500L17 1l6.500 7.500H257" fill="none" stroke="#c6c6c6" />
      </svg>
      {[["Preenchimento", 86], ["Linha", 29]].map(([t, w]) => (
        <div key={t} className="mt-[5px] flex h-[21px] items-center">
          <svg viewBox="0 0 5 9" className="mb-[2px] ml-[9px] h-[9px] w-[5px]"><path d="M.5 1v7L4.500 4.500z" fill="#fff" stroke="#666" /></svg>
          <Fit w={w as number} className="ml-[8px] text-xs leading-4 font-bold">{t as string}</Fit>
        </div>
      ))}
    </aside>
  );
}

function StatusBar() {
  return (
    <div className="flex h-[22px] shrink-0 items-center border-t border-[#c6c6c6] bg-[#f3f2f1] text-[#555]">
      <Fit w={34} className="mb-[2px] ml-[8px] text-[11px] leading-4">Pronto</Fit>
      <div className="ml-[1258px] flex h-[21px] w-10 shrink-0 items-center justify-center bg-[#d2d0ce] pr-px pb-px">
        <svg viewBox="0 0 13 13" className="h-[13px] w-[13px]"><path d="M.5.500h12v12H.500zM4.500.500v12M8.500.500v12M.500 4.500h12M.500 8.500h12" fill="none" stroke="#444" /></svg>
      </div>
      <svg viewBox="0 0 14 13" className="mb-px ml-[13px] h-[13px] w-[14px] shrink-0"><path d="M.5.500h13v12H.500zM3.500 2.500h7v8h-7zM5 4.500h4M5 6.500h4M5 8.500h4" fill="none" stroke="#444" /></svg>
      <svg viewBox="0 0 14 13" className="mb-px ml-[26px] h-[13px] w-[14px] shrink-0"><path d="M.5.500h13v12H.500zM.500 7.500h8v-7M4.500.500v7" fill="none" stroke="#444" /></svg>
      <div className="mb-[2px] ml-[19px] h-px w-2 shrink-0 bg-[#444]" />
      <svg viewBox="0 0 100 12" className="mb-[2px] ml-[5px] h-3 w-[100px] shrink-0"><path d="M0 6.500h100M50.500 4v5" stroke="#555" /><path d="M53 1h5v11h-5z" fill="#666" /></svg>
      <svg viewBox="0 0 9 9" className="mb-[2px] ml-[4px] h-[9px] w-[9px] shrink-0"><path d="M4.500 0v9M0 4.500h9" stroke="#555" /></svg>
      <Fit w={27} className="mb-[2px] ml-[13px] text-[11px] leading-4">130%</Fit>
    </div>
  );
}

function Taskbar() {
  return (
    <footer className="flex h-10 shrink-0 items-center bg-linear-to-r from-[#22373f] from-40% to-[#182745] to-85% text-white">
      <div className="flex w-12 shrink-0 justify-center">
        <svg viewBox="0 0 16 16" className="h-4 w-4"><path d="M0 2.200l7-1V7.500H0zM8 1l8-1v7.500H8zM0 8.500h7v6.300l-7-1zM8 8.500h8V16l-8-1.100z" fill="#fff" /></svg>
      </div>
      <div className="flex h-10 w-[344px] shrink-0 items-center border border-[#c8c8c8] bg-[#f2f2f2] text-[#333]">
        <svg viewBox="0 0 17 17" className="ml-[11px] h-[17px] w-[17px]"><circle cx="10.500" cy="6.500" r="5.500" fill="none" stroke="#222" strokeWidth="1.200" /><path d="M6.500 10.500L.5 16.500" stroke="#222" strokeWidth="1.200" /></svg>
        <Fit w={175} className="mt-px ml-[11px] text-[14.500px] leading-5">Digite aqui para pesquisar</Fit>
      </div>
      <svg viewBox="0 0 16 16" className="ml-[16px] h-4 w-4 shrink-0"><circle cx="8" cy="8" r="6.800" fill="none" stroke="#fff" strokeWidth="2" /></svg>
      <svg viewBox="0 0 17 16" className="ml-[32px] h-4 w-[17px] shrink-0">
        <path d="M.5 0v2.500h10V0M.5 16v-2.500h10V16M.500 4.500h10v7H.500zM14.500 0v3M14.500 7v9" fill="none" stroke="#fff" /><path d="M13 4h3v3h-3z" fill="#fff" />
      </svg>
      <div className="ml-[22px] flex h-10 w-10 shrink-0 items-center justify-center border-b-2 border-[#76b9ed] pt-[2px]">
        <svg viewBox="0 0 24 24" className="h-6 w-6">
          <defs>
            <linearGradient id="eg" x1="0" y1=".3" x2="1" y2=".5"><stop offset="0" stopColor="#1d9fdf" /><stop offset=".5" stopColor="#35c1d5" /><stop offset="1" stopColor="#65d94f" /></linearGradient>
            <linearGradient id="eb" x1="0" y1="0" x2="0" y2="1"><stop offset="0" stopColor="#1b8fe0" /><stop offset="1" stopColor="#0f6cc4" /></linearGradient>
          </defs>
          <circle cx="12" cy="12" r="12" fill="url(#eb)" />
          <path d="M.3 10C1.500 3.500 6.500 0 12 0c7 0 12 5 12 10.500 0 3.500-2.500 5.500-5.500 5.500-2.500 0-4-.8-4-1.500 0-.8 1-1.200 1-3 0-2.500-2.500-4.500-6-4.500C5 7 1.500 8.500.3 10z" fill="url(#eg)" />
          <path d="M9 9.500C6 11 6.500 18 11 20c3.500 1.500 8.500 0 11-2.500-2 4-6 6.500-10.500 6.500C7 23 4.500 18.500 5 14.500 5.300 12 7 10 9 9.500z" fill="#0c4f9e" />
          <path d="M15 13q-.5 3 4 3.500c2 .2 4-.8 5-2l-1.800 3c-3.500 2-10 2-11.200-1.500-.8-3 1-5 2.500-5q1.500 0 1.500 2z" fill="#22373f" />
        </svg>
      </div>
      <svg viewBox="0 0 22 18" className="ml-[18px] h-[18px] w-[22px] shrink-0">
        <path d="M0 0h8l2 2v5H0z" fill="#e0a010" /><path d="M0 3h9l1.500-2H22v17H0z" fill="#fbd264" />
        <path d="M4 18v-5q0-3 3-3h8q3 0 3 3v5h-4v-4H8v4z" fill="#3f8fd8" />
      </svg>
      <svg viewBox="0 0 23 24" className="ml-[26px] h-6 w-[23px] shrink-0">
        <path d="M6 5V2q0-1 1-1h9q1 0 1 1v3" fill="none" stroke="#2da8e8" strokeWidth="2" />
        <path d="M0 5h23v15q0 3-3 3H3q-3 0-3-3z" fill="#f4f4f4" />
        <path d="M7 9h4v4H7z" fill="#f25022" /><path d="M12 9h4v4h-4z" fill="#7fba00" /><path d="M7 14h4v4H7z" fill="#00a4ef" /><path d="M12 14h4v4h-4z" fill="#ffb900" />
      </svg>
      <svg viewBox="0 0 24 22" className="ml-[26px] h-[22px] w-6 shrink-0">
        <path d="M0 7l12-7 12 7v4H0z" fill="#0a58a8" /><path d="M2 7h20v8H2z" fill="#f4f6f8" /><path d="M0 7l24 15H0z" fill="#1fa0e6" /><path d="M24 7v15L10.500 14z" fill="#3fc4f5" />
      </svg>
      <div className="ml-[13px] flex h-10 w-12 shrink-0 items-center justify-center border-b-2 border-[#76b9ed] bg-[#4a5b63] pt-px">
        <svg viewBox="0 0 24 22" className={`h-[22px] w-6 ${UI}`}>
          <path d="M6 0h9v6H6z" fill="#21a366" /><path d="M15 0h7q2 0 2 2v4h-9z" fill="#33c481" /><path d="M6 6h9v5H6z" fill="#107c41" /><path d="M15 6h9v5h-9z" fill="#21a366" /><path d="M6 11h9v5H6z" fill="#185c37" /><path d="M15 11h9v5h-9z" fill="#107c41" /><path d="M6 16h18v5q0 1-1 1H6z" fill="#185c37" />
          <path d="M0 5h12v12H0z" fill="#107c41" />
          <text x="6" y="14.700" textAnchor="middle" fontSize="10.500" fontWeight="800" fill="#fff">X</text>
        </svg>
      </div>
      <svg viewBox="0 0 21 17" className="ml-[446px] h-[17px] w-[21px] shrink-0">
        <path d="M5 13a4.500 4.500 0 010-8 6 6 0 0111-1 4.500 4.500 0 01.5 9z" fill="#b9dcf6" /><path d="M8 8a4 4 0 017-3 4 4 0 013 6q-6 2-10-3z" fill="#e6f3fc" /><path d="M10 8q3 4 3 6a2.500 2.500 0 01-5 0q0-2 2-6z" fill="#2f86dc" />
      </svg>
      <Fit w={29} className="mt-[2px] ml-[10px] text-[13px] leading-5">31°C</Fit>
      <Fit w={72} className="mt-[2px] ml-[9px] text-[13px] leading-5">Chuva fraca</Fit>
      <svg viewBox="0 0 12 7" className="ml-[17px] h-[7px] w-3 shrink-0"><path d="M.6 6.400L6 1l5.400 5.400" fill="none" stroke="#fff" strokeWidth="1.200" /></svg>
      <svg viewBox="0 0 12 16" className="ml-[12px] h-4 w-3 shrink-0"><path d="M2 1.500q3-2 6 0M2 14.500q3 2 6 0M.6 4.500h7.500v7H.600zM8 7l3-1.500v5L8 9" fill="none" stroke="#fff" strokeWidth="1.200" /></svg>
      <svg viewBox="0 0 17 11" className="ml-[10px] h-[11px] w-[17px] shrink-0"><path d="M4 11a3.500 3.500 0 01-.5-7A5 5 0 0112 3q1 .3 1.500 2A3 3 0 0114 11z" fill="#eee" /><path d="M4 4a5 5 0 018.500 0L6 8z" fill="#bbb" /></svg>
      <svg viewBox="0 0 17 12" className="ml-[7px] mb-px h-3 w-[17px] shrink-0"><path d="M5 3.500h10v7H5zM15 5.500h1.500v3H15M2.500 7v3.500H5M.5 2.500h4v3q-2 2-4 0zM1.500 0v2M3.500 0v2" fill="none" stroke="#fff" /><path d="M7 5h7v4H7z" fill="#fff" /></svg>
      <svg viewBox="0 0 13 13" className="ml-[10px] h-[13px] w-[13px] shrink-0"><path d="M.7 12.500A12 12 0 0112.500.7M4 12.500A8.500 8.500 0 0112.500 4M7.500 12.500a5 5 0 015-5" fill="none" stroke="#fff" strokeWidth="1.100" /><circle cx="11.500" cy="11.500" r="1.300" fill="#fff" /></svg>
      <svg viewBox="0 0 17 14" className="ml-[8px] h-[14px] w-[17px] shrink-0"><path d="M.6 4.500H3l3.500-3.500v12L3 9.500H.600zM9 5q1.500 2 0 4M11.500 3q3 4 0 8M14 1q4.500 6 0 12" fill="none" stroke="#fff" strokeWidth="1.100" /></svg>
      <div className="ml-[8px] flex w-[60px] shrink-0 flex-col items-center pt-px">
        <Fit w={28} className="text-xs leading-[18px]">17:48</Fit>
        <Fit w={58} className="text-xs leading-[18px]">14/12/2021</Fit>
      </div>
      <div className="relative ml-[16px] h-6 w-[25px] shrink-0">
        <svg viewBox="0 0 17 17" className="h-[17px] w-[17px]"><path d="M0 0h16v13h-8l-3 3v-3H0z" fill="#fff" /><path d="M3 3.500h10M3 6.500h10M3 9.500h6" stroke="#182745" /></svg>
        <span className="absolute top-[9px] left-[8px] h-4 w-4 rounded-full border border-[#888] bg-[#2c2c34] text-center text-[11px] leading-[14px] font-bold">4</span>
      </div>
      <div className="ml-[11px] h-10 w-px bg-[#6b7486]" />
    </footer>
  );
}

export default function App() {
  return (
    <div className={`flex h-[900px] w-[1600px] flex-col overflow-hidden bg-[#f3f2f1] ${UI}`}>
      <TitleBar />
      <Tabs />
      <Ribbon />
      <QuickAccess />
      <FormulaBar />
      <main className="flex h-[596px] shrink-0 bg-[#e6e6e6]">
        <div className="flex w-[1315px] shrink-0 flex-col">
          <div className="flex h-[569px] shrink-0">
            <Grid />
            <VerticalScroll />
          </div>
          <SheetTabs />
        </div>
        <Pane />
      </main>
      <StatusBar />
      <Taskbar />
    </div>
  );
}
